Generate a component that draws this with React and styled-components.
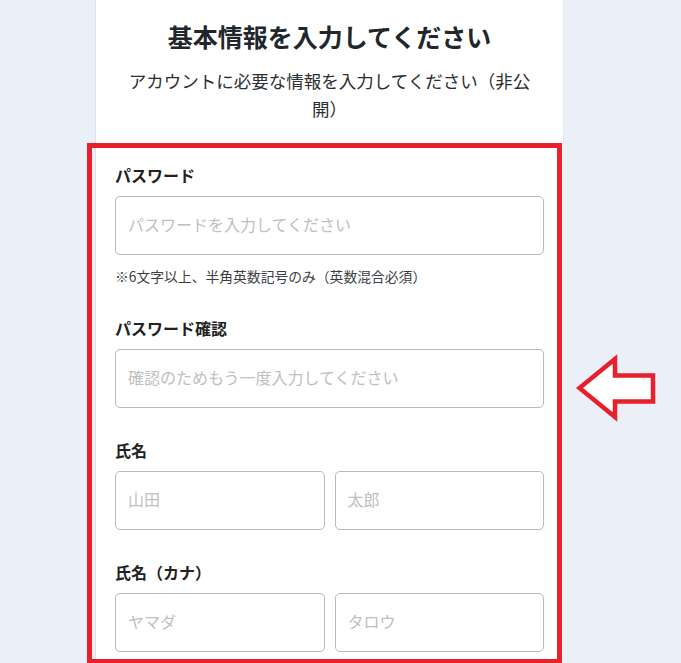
import React from "react";
import styled, { createGlobalStyle } from "styled-components";

const GlobalStyle = createGlobalStyle`
  html, body {
    margin: 0;
    padding: 0;
    background: #ebeff7;
  }
  body {
    font-family: "Noto Sans CJK JP", "Noto Sans", sans-serif;
    color: #222;
  }
  * { box-sizing: border-box; }
`;

const Page = styled.div`
  position: relative;
  min-height: 663px;
  padding-left: 95px;
  overflow: hidden;
`;

const Card = styled.main`
  width: 469px;
  min-height: 663px;
  background: #fff;
  border-left: 1px solid #dfe3e9;
  border-right: 1px solid #e6e9ee;
  padding: 18px 19px 0;
`;

const Header = styled.header`
  text-align: center;
  padding-top: 0;
`;

const Title = styled.h1`
  margin: 0;
  font-size: 25px;
  line-height: 36px;
  font-weight: 700;
  color: #1f272c;
`;

const Subtitle = styled.p`
  margin: 13px auto 0;
  max-width: 410px;
  font-size: 17.5px;
  line-height: 28px;
  color: #2b2f33;
`;

const FormSection = styled.section`
  position: relative;
  margin-top: 20px;
  padding: 22px 0 12px;
  display: flex;
  flex-direction: column;
  gap: 32px;

  &::before {
    content: "";
    position: absolute;
    top: 0;
    bottom: 0;
    left: -28px;
    right: -18px;
    border: 5px solid #e8202c;
    pointer-events: none;
  }
`;

const Field = styled.div`
  display: flex;
  flex-direction: column;
`;

const Label = styled.label`
  font-size: 16px;
  line-height: 20px;
  font-weight: 700;
  color: #222;
  margin-bottom: 11px;
`;

const Row = styled.div`
  display: grid;
  grid-template-columns: 1fr 1fr;
  gap: 10px;
`;

const Input = styled.input`
  width: 100%;
  height: 59px;
  border: 1px solid #b5babe;
  border-radius: 5px;
  padding: 0 12px 3px;
  font-family: "Noto Sans CJK JP", "Noto Sans", sans-serif;
  font-size: 16px;
  color: #222;
  background: #fff;
  outline: none;

  &::placeholder {
    color: #bcc0c3;
  }
`;

const Hint = styled.p`
  margin: 11px 0 0;
  font-size: 13.8px;
  line-height: 20px;
  color: #3a3e42;
`;

const Arrow = styled.svg`
  position: absolute;
  left: 573px;
  top: 353px;
  width: 86px;
  height: 70px;
`;

export default function App() {
  return (
    <>
      <GlobalStyle />
      <Page>
        <Card>
          <Header>
            <Title>基本情報を入力してください</Title>
            <Subtitle>アカウントに必要な情報を入力してください（非公開）</Subtitle>
          </Header>
          <FormSection>
            <Field>
              <Label>パスワード</Label>
              <Input type="password" placeholder="パスワードを入力してください" />
              <Hint>※6文字以上、半角英数記号のみ（英数混合必須）</Hint>
            </Field>
            <Field>
              <Label>パスワード確認</Label>
              <Input type="password" placeholder="確認のためもう一度入力してください" />
            </Field>
            <Field>
              <Label>氏名</Label>
              <Row>
                <Input placeholder="山田" />
                <Input placeholder="太郎" />
              </Row>
            </Field>
            <Field>
              <Label>氏名（カナ）</Label>
              <Row>
                <Input placeholder="ヤマダ" />
                <Input placeholder="タロウ" />
              </Row>
            </Field>
          </FormSection>
        </Card>
        <Arrow viewBox="573 353 86 70">
          <polygon
            points="579.5,388 615,359 615,375.5 653,375.5 653,401.5 615,401.5 615,417"
            fill="#ffffff"
            stroke="#e8202c"
            strokeWidth="4.5"
            strokeLinejoin="miter"
          />
        </Arrow>
      </Page>
    </>
  );
}
